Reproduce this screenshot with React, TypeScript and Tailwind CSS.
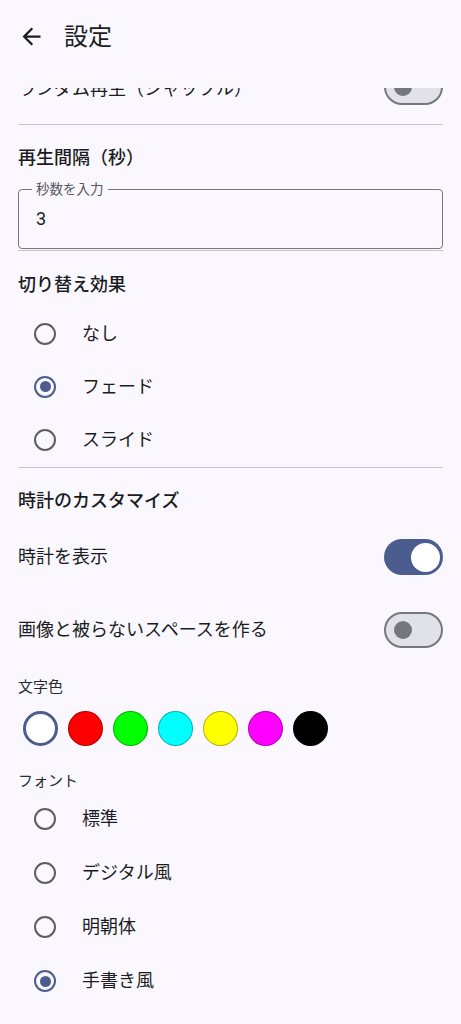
function Switch({ on }: { on: boolean }) {
    if (on) {
        return (
            <div className="w-[59px] h-[36px] rounded-full bg-[#4b5c8e] flex items-center justify-end pr-[3px] shrink-0">
                <div className="w-[29px] h-[29px] rounded-full bg-white" />
            </div>
        );
    }
    return (
        <div className="w-[59px] h-[36px] rounded-full bg-[#e1e2e9] border-2 border-[#74777f] flex items-center pl-[8px] shrink-0">
            <div className="w-[18px] h-[18px] rounded-full bg-[#74777f]" />
        </div>
    );
}

function Radio({ label, checked, tall }: { label: string; checked?: boolean; tall?: boolean }) {
    return (
        <div className={(tall ? "h-[54px]" : "h-[53px]") + " flex items-center pl-[18px]"}>
            <div className="w-[54px] h-full flex items-center justify-center">
                <div
                    className={
                        checked
                            ? "w-[22px] h-[22px] rounded-full border-2 border-[#4b5c8e] flex items-center justify-center"
                            : "w-[22px] h-[22px] rounded-full border-2 border-[#5c5e66]"
                    }
                >
                    {checked && <div className="w-[11px] h-[11px] rounded-full bg-[#4b5c8e]" />}
                </div>
            </div>
            <span className="ml-[10px] text-[18px] leading-[24px] text-[#1b1c21]">{label}</span>
        </div>
    );
}

function Divider({ className }: { className: string }) {
    return <div className={"mx-[18px] h-px bg-[#c5c6cd] " + className} />;
}

const colors = ["#ffffff", "#ff0000", "#00ff00", "#00ffff", "#ffff00", "#ff00ff", "#000000"];

export default function App() {
    return (
        <div
            className="h-[1024px] overflow-hidden flex flex-col bg-[#faf8fe] text-[#1b1c21]"
            style={{ fontFamily: 'Roboto, "Noto Sans CJK JP", sans-serif' }}
        >
            <header className="h-[88px] shrink-0 flex items-start pt-[23px] pl-[18px]">
                <svg width="27" height="27" viewBox="0 0 24 24" fill="#1b1c21">
                    <path d="M20 11H7.83l5.59-5.59L12 4l-8 8 8 8 1.41-1.41L7.83 13H20v-2z" />
                </svg>
                <h1 className="ml-[19px] text-[24px] leading-[28px] text-[#1b1c21]">設定</h1>
            </header>

            {/* scrolled list: first row is partly hidden under the top bar */}
            <div className="flex-1 overflow-hidden">
                <div className="mt-[-19px] h-[36px] px-[18px] flex items-center justify-between">
                    <span className="text-[18px] leading-[24px] pt-[3px]">ランダム再生（シャッフル）</span>
                    <Switch on={false} />
                </div>
                <Divider className="mt-[19px]" />

                <h2 className="mt-[21px] px-[18px] text-[18px] leading-[24px] font-medium">再生間隔（秒）</h2>
                <div className="mt-[19px] mx-[18px] h-[60px] relative border border-[#75777f] rounded-[4px] flex items-center pl-[17px]">
                    <span className="absolute left-[13px] top-[-9px] px-[4px] bg-[#faf8fe] text-[13.5px] leading-[16px] text-[#55575e]">
                        秒数を入力
                    </span>
                    <span className="text-[18px] leading-[24px]">3</span>
                </div>
                <Divider className="mt-[1px]" />

                <h2 className="mt-[22px] px-[18px] text-[18px] leading-[24px] font-medium">切り替え効果</h2>
                <div className="mt-[10px]">
                    <Radio label="なし" />
                    <Radio label="フェード" checked />
                    <Radio label="スライド" />
                </div>
                <Divider className="mt-[1px]" />

                <h2 className="mt-[21px] px-[18px] text-[18px] leading-[24px] font-medium">時計のカスタマイズ</h2>
                <div className="mt-[26px] h-[36px] px-[18px] flex items-center justify-between">
                    <span className="text-[18px] leading-[24px]">時計を表示</span>
                    <Switch on />
                </div>
                <div className="mt-[37px] h-[36px] px-[18px] flex items-center justify-between">
                    <span className="text-[18px] leading-[24px]">画像と被らないスペースを作る</span>
                    <Switch on={false} />
                </div>

                <p className="mt-[29px] px-[18px] text-[15px] leading-[20px] text-[#2a2b30]">文字色</p>
                <div className="mt-[14px] pl-[23px] flex gap-[10px]">
                    {colors.map((c, i) =>
                        i === 0 ? (
                            <div key={c} className="w-[35px] h-[35px] rounded-full bg-white border-[3px] border-[#4b5c8e]" />
                        ) : (
                            <div
                                key={c}
                                className="w-[35px] h-[35px] rounded-full border border-black/30"
                                style={{ backgroundColor: c }}
                            />
                        )
                    )}
                </div>

                <p className="mt-[25px] px-[18px] text-[15px] leading-[20px] text-[#2a2b30]">フォント</p>
                <div className="mt-[1px]">
                    <Radio label="標準" tall />
                    <Radio label="デジタル風" tall />
                    <Radio label="明朝体" tall />
                    <Radio label="手書き風" checked tall />
                </div>
            </div>
        </div>
    );
}
